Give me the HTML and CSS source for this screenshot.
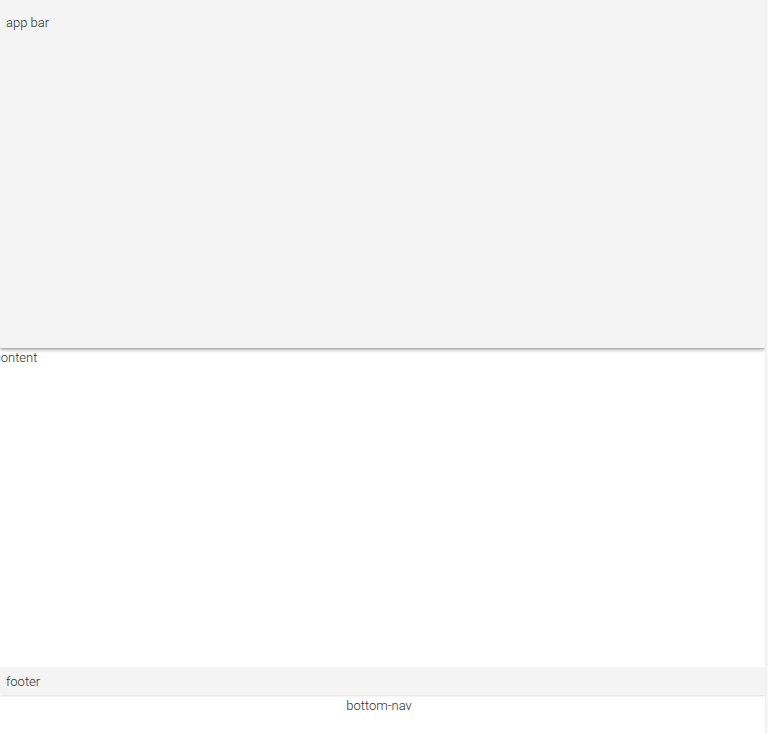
FILE: index.html
```html
<!DOCTYPE html>
<html>
<head>
<meta charset="utf-8">
<link rel="stylesheet" href="styles.css">
</head>
<body>
<div class="layout">
  <div class="shell">
    <header class="app-bar">app bar</header>
    <main class="content"><span class="content-label">content</span></main>
    <footer class="footer">footer</footer>
    <nav class="bottom-nav">bottom-nav</nav>
  </div>
  <div class="edge"></div>
</div>
</body>
</html>
```
FILE: styles.css
```css
html, body {
  margin: 0;
  padding: 0;
  height: 100%;
  background: #ffffff;
}
body {
  font-family: Roboto, "Liberation Sans", sans-serif;
  font-size: 13px;
  font-weight: 300;
  line-height: 16px;
  color: #2e2e2e;
  overflow: hidden;
}
.layout {
  display: flex;
  height: 733px;
}
.shell {
  width: 765px;
  display: flex;
  flex-direction: column;
  overflow: hidden;
}
.edge {
  width: 3px;
  background: linear-gradient(to right, #ececec, #fafafa);
}
.app-bar {
  height: 348px;
  box-sizing: border-box;
  padding: 15px 6px 0;
  background: #f4f4f4;
  box-shadow: 0 1px 4px rgba(0,0,0,0.5);
  position: relative;
  z-index: 2;
}
.content {
  flex: 1;
  padding-top: 2px;
  background: #ffffff;
}
.content-label {
  display: block;
  margin-left: -6px;
}
.footer {
  height: 28px;
  box-sizing: border-box;
  padding: 7px 6px 0;
  background: #f4f4f4;
  box-shadow: 0 1px 2px rgba(0,0,0,0.12);
  position: relative;
  z-index: 1;
}
.bottom-nav {
  height: 38px;
  box-sizing: border-box;
  padding: 3px 7px 0 0;
  text-align: center;
  background: #ffffff;
}
```
